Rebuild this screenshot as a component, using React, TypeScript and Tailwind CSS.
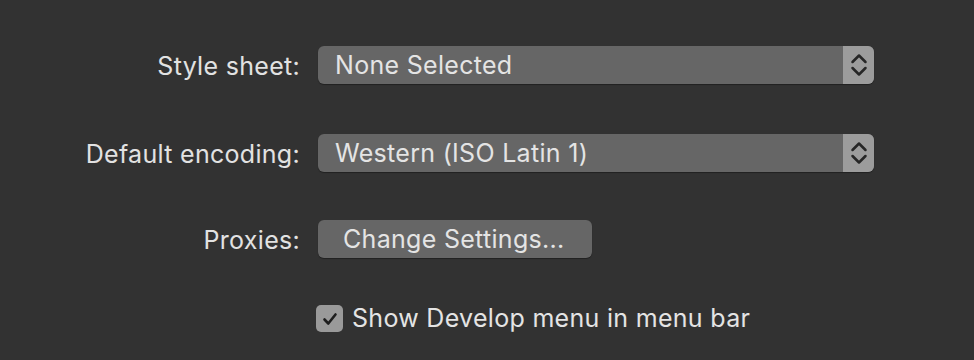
import React from "react";

const Stepper = () => (
  <div className="flex h-full w-[31px] items-center justify-center rounded-r-[6px] bg-[#9c9c9c]">
    <svg width="18" height="26" viewBox="0 0 18 26" fill="none">
      <path d="M2.5 10 L9 3.5 L15.5 10" stroke="#262626" strokeWidth="2.5" strokeLinecap="round" strokeLinejoin="round" />
      <path d="M2.5 16 L9 22.5 L15.5 16" stroke="#262626" strokeWidth="2.5" strokeLinecap="round" strokeLinejoin="round" />
    </svg>
  </div>
);

const Select = ({ value }: { value: string }) => (
  <div className="flex h-[38px] w-[556px] items-center rounded-[6px] bg-[#666666] shadow-[0_1px_1px_rgba(0,0,0,0.35)]">
    <span className="flex-1 translate-y-[1px] pl-[17px] text-[25px] tracking-[0.3px] text-[#e4e4e4]">{value}</span>
    <Stepper />
  </div>
);

const Label = ({ children }: { children: React.ReactNode }) => (
  <div className="translate-y-[1px] text-right text-[25px] leading-[38px] tracking-[0.3px] text-[#e2e2e2]">{children}</div>
);

const App = () => {
  return (
    <div
      className="h-[360px] w-[974px] bg-[#323232] pt-[46px]"
      style={{ fontFamily: "Inter, 'Noto Sans', sans-serif" }}
    >
      <div className="grid grid-cols-[300px_1fr] items-center gap-x-[18px]">
        <Label>Style sheet:</Label>
        <Select value="None Selected" />
        <div className="h-[50px]" />
        <div />
        <Label>Default encoding:</Label>
        <Select value="Western (ISO Latin 1)" />
        <div className="h-[48px]" />
        <div />
        <Label>Proxies:</Label>
        <div className="flex h-[38px] w-[274px] items-center rounded-[6px] bg-[#666666] pl-[25px] text-[25px] tracking-[0.3px] text-[#e4e4e4] shadow-[0_1px_1px_rgba(0,0,0,0.35)]">
          <span className="translate-y-[1px]">Change Settings...</span>
        </div>
        <div className="h-[42px]" />
        <div />
        <div />
        <div className="flex items-center gap-[9px]">
          <div className="-ml-[2px] flex h-[27px] w-[27px] items-center justify-center rounded-[5px] bg-[#9a9a9a]">
            <svg width="18" height="18" viewBox="0 0 18 18" fill="none">
              <path d="M3.5 9.5 L7.3 13.5 L14.5 4.5" stroke="#1e1e1e" strokeWidth="2.6" strokeLinecap="round" strokeLinejoin="round" />
            </svg>
          </div>
          <span className="text-[25px] tracking-[0.3px] text-[#e4e4e4]">Show Develop menu in menu bar</span>
        </div>
      </div>
    </div>
  );
};

export default App;
